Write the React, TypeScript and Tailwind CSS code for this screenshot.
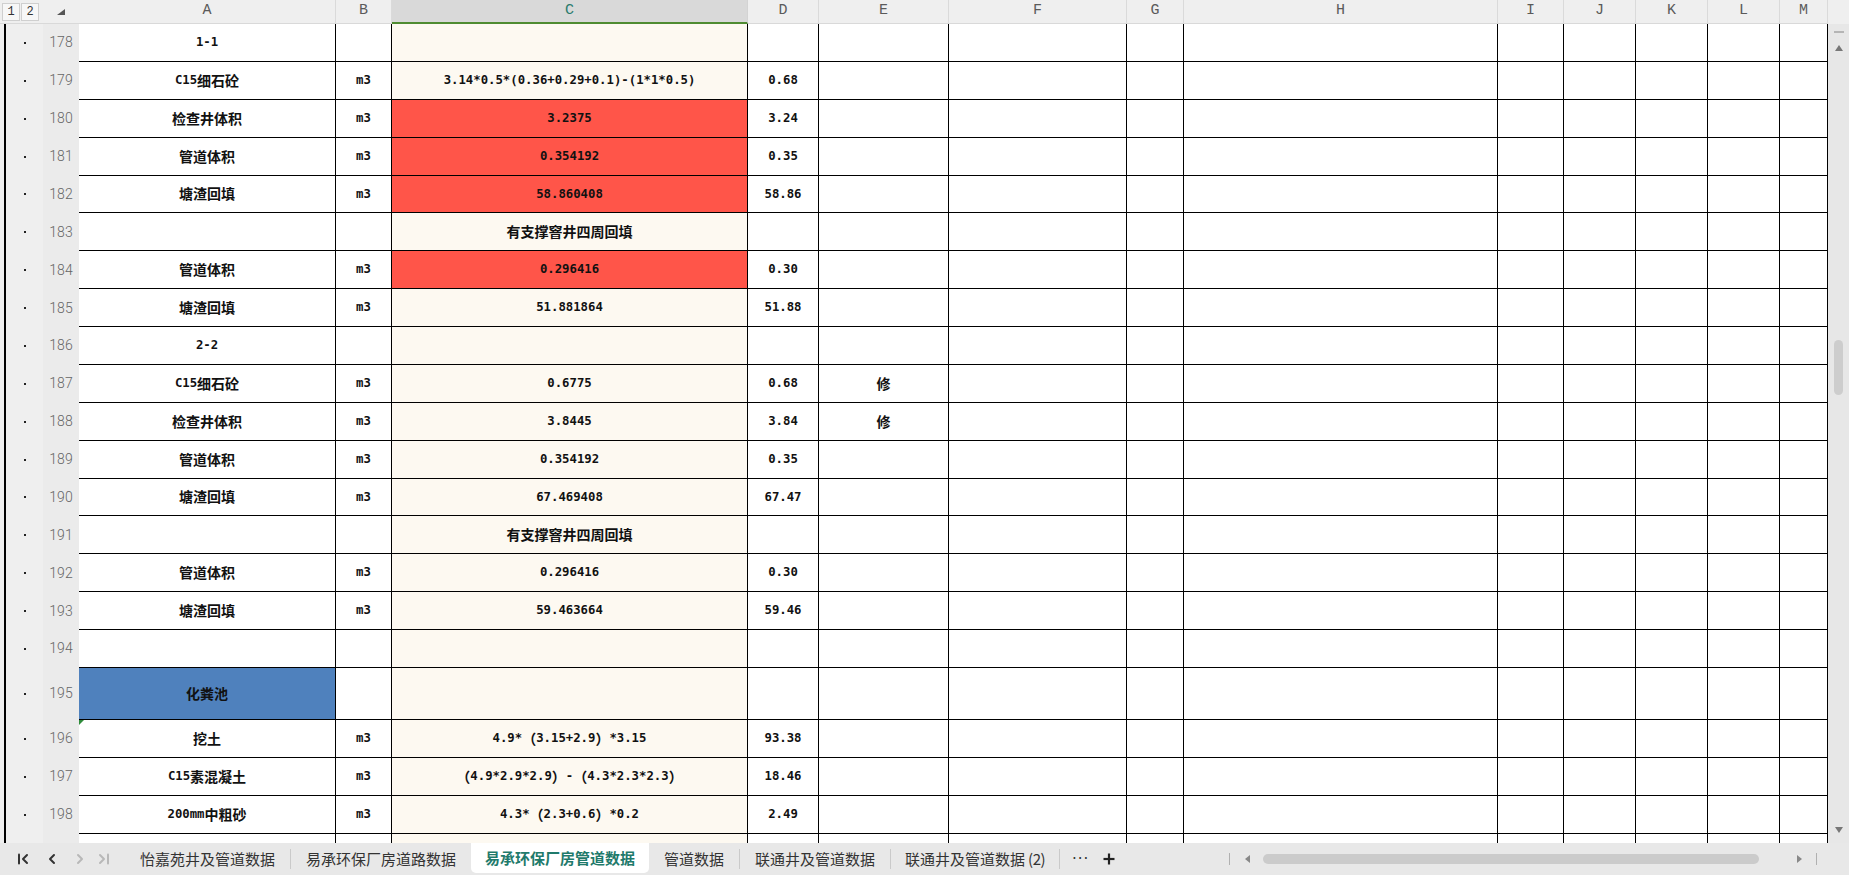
import React from "react";

type Row = {
  n: number;
  a?: string;
  b?: string;
  c?: string;
  d?: string;
  e?: string;
  red?: boolean;
  blue?: boolean;
  tall?: boolean;
  mark?: boolean;
};

const rows: Row[] = [
  { n: 178, a: "1-1" },
  { n: 179, a: "C15细石砼", b: "m3", c: "3.14*0.5*(0.36+0.29+0.1)-(1*1*0.5)", d: "0.68" },
  { n: 180, a: "检查井体积", b: "m3", c: "3.2375", d: "3.24", red: true },
  { n: 181, a: "管道体积", b: "m3", c: "0.354192", d: "0.35", red: true },
  { n: 182, a: "塘渣回填", b: "m3", c: "58.860408", d: "58.86", red: true },
  { n: 183, c: "有支撑窨井四周回填" },
  { n: 184, a: "管道体积", b: "m3", c: "0.296416", d: "0.30", red: true },
  { n: 185, a: "塘渣回填", b: "m3", c: "51.881864", d: "51.88" },
  { n: 186, a: "2-2" },
  { n: 187, a: "C15细石砼", b: "m3", c: "0.6775", d: "0.68", e: "修" },
  { n: 188, a: "检查井体积", b: "m3", c: "3.8445", d: "3.84", e: "修" },
  { n: 189, a: "管道体积", b: "m3", c: "0.354192", d: "0.35" },
  { n: 190, a: "塘渣回填", b: "m3", c: "67.469408", d: "67.47" },
  { n: 191, c: "有支撑窨井四周回填" },
  { n: 192, a: "管道体积", b: "m3", c: "0.296416", d: "0.30" },
  { n: 193, a: "塘渣回填", b: "m3", c: "59.463664", d: "59.46" },
  { n: 194 },
  { n: 195, a: "化粪池", blue: true, tall: true },
  { n: 196, a: "挖土", b: "m3", c: "4.9*（3.15+2.9）*3.15", d: "93.38", mark: true },
  { n: 197, a: "C15素混凝土", b: "m3", c: "（4.9*2.9*2.9）-（4.3*2.3*2.3）", d: "18.46" },
  { n: 198, a: "200mm中粗砂", b: "m3", c: "4.3*（2.3+0.6）*0.2", d: "2.49" },
  { n: 199 },
];

const letters = ["A", "B", "C", "D", "E", "F", "G", "H", "I", "J", "K", "L", "M"];
const colW = [
  "w-[257px]",
  "w-[56px]",
  "w-[356px]",
  "w-[71px]",
  "w-[130px]",
  "w-[178px]",
  "w-[57px]",
  "w-[314px]",
  "w-[66px]",
  "w-[72px]",
  "w-[72px]",
  "w-[72px]",
  "w-[48px]",
];

const cellFont = {
  fontFamily: '"DejaVu Sans Mono", "Noto Sans CJK SC", monospace',
};

function MixedText({ text }: { text: string }) {
  const parts = text.split(/([\u3000-\u9fff\uff00-\uffef]+)/).filter((p) => p.length > 0);
  return (
    <>
      {parts.map((p, i) =>
        /[\u3000-\u9fff\uff00-\uffef]/.test(p) ? (
          <span key={i} className="text-[14px] [font-family:'Noto_Sans_CJK_SC',sans-serif]">
            {p}
          </span>
        ) : (
          <span key={i} className="text-[12.3px]">
            {p}
          </span>
        )
      )}
    </>
  );
}

function HeaderRow() {
  return (
    <div className="flex h-[24px] shrink-0 bg-[#efefef]">
      <div className="w-[43px] shrink-0 flex items-start pt-[3px] pl-[2px] gap-[1px] border-b border-[#d9d9d9]">
        <div className="w-[18px] h-[18px] border border-[#cfcfcf] bg-[#f7f7f7] flex items-center justify-center text-[12px] text-[#333] [font-family:'Liberation_Mono',monospace]">
          1
        </div>
        <div className="w-[18px] h-[18px] border border-[#cfcfcf] bg-[#f7f7f7] flex items-center justify-center text-[12px] text-[#333] [font-family:'Liberation_Mono',monospace]">
          2
        </div>
      </div>
      <div className="w-[36px] shrink-0 flex items-center justify-center border-b border-[#d9d9d9]">
        <svg width="8" height="6" viewBox="0 0 8 6">
          <polygon points="8,0 8,6 0,6" fill="#555" />
        </svg>
      </div>
      {letters.map((l, i) => (
        <div
          key={l}
          className={`${colW[i]} shrink-0 h-full border-r flex items-center justify-center text-[15px] [font-family:'Liberation_Mono',monospace] ${
            l === "C"
              ? "bg-[#d9d9d9] text-[#2b7b6c] border-r-[#d3d3d3] border-b-2 border-b-[#4f8b31]"
              : "text-[#5a5a5a] border-r-[#dadada] border-b border-b-[#d9d9d9]"
          }`}
        >
          {l}
        </div>
      ))}
    </div>
  );
}

function BodyRow({ r }: { r: Row }) {
  const h = r.tall ? "h-[52px]" : "h-[37.88px]";
  return (
    <div className={`flex ${h} shrink-0`}>
      <div className="w-[43px] shrink-0 h-full bg-[#efefef] flex items-stretch">
        <div className="ml-[4px] w-[2px] bg-black" />
        <div className="flex-1 flex items-center justify-center">
          <div className="w-[2px] h-[2px] bg-[#222]" />
        </div>
      </div>
      <div className="w-[36px] shrink-0 h-full bg-[#ebebeb] flex items-center justify-center text-[14px] text-[#666] font-light [font-family:Roboto,sans-serif]">
        {r.n === 199 ? "" : r.n}
      </div>
      {letters.map((l, i) => {
        let bg = "bg-white";
        let text: string | undefined;
        if (l === "A") {
          text = r.a;
          if (r.blue) bg = "bg-[#4f81bd]";
        } else if (l === "B") text = r.b;
        else if (l === "C") {
          text = r.c;
          bg = r.red ? "bg-[#ff5549]" : "bg-[#fdf9f1]";
        } else if (l === "D") text = r.d;
        else if (l === "E") text = r.e;
        return (
          <div
            key={l}
            className={`${colW[i]} ${bg} relative shrink-0 h-full border-r border-b border-black flex items-center justify-center font-bold text-[#111] whitespace-nowrap overflow-hidden`}
            style={cellFont}
          >
            {l === "A" && r.mark ? (
              <svg className="absolute left-0 top-0" width="5" height="5" viewBox="0 0 5 5">
                <polygon points="0,0 5,0 0,5" fill="#2e8b3a" />
              </svg>
            ) : null}
            {text ? <MixedText text={text} /> : null}
          </div>
        );
      })}
    </div>
  );
}

function VScroll() {
  return (
    <div className="w-[21px] shrink-0 flex flex-col">
      <div className="h-[24px] shrink-0 bg-[#efefef]" />
      <div className="flex-1 bg-[#e7e7e7] flex flex-col items-center">
        <div className="mt-[7px] w-[10px] h-[2px] bg-[#b5b5b5]" />
        <svg className="mt-[12px]" width="8" height="6" viewBox="0 0 8 6">
          <polygon points="4,0 8,6 0,6" fill="#777" />
        </svg>
        <div className="mt-[289px] w-[9px] h-[55px] rounded-full bg-[#cdcdcd]" />
        <div className="flex-1" />
        <svg className="mb-[10px]" width="8" height="6" viewBox="0 0 8 6">
          <polygon points="0,0 8,0 4,6" fill="#777" />
        </svg>
      </div>
    </div>
  );
}

function NavIcon({ kind }: { kind: "first" | "prev" | "next" | "last" }) {
  const dark = kind === "first" || kind === "prev";
  const color = dark ? "#333" : "#b8b8b8";
  return (
    <svg width="12" height="12" viewBox="0 0 12 12" fill="none" stroke={color} strokeWidth="2" strokeLinecap="round" strokeLinejoin="round">
      {kind === "first" && (
        <>
          <line x1="2" y1="1.5" x2="2" y2="10.5" />
          <polyline points="10,2 6,6 10,10" />
        </>
      )}
      {kind === "prev" && <polyline points="8,2 4,6 8,10" />}
      {kind === "next" && <polyline points="4,2 8,6 4,10" />}
      {kind === "last" && (
        <>
          <polyline points="2,2 6,6 2,10" />
          <line x1="10" y1="1.5" x2="10" y2="10.5" />
        </>
      )}
    </svg>
  );
}

function Sep() {
  return <div className="w-[1px] h-[20px] bg-[#cacaca] self-center shrink-0" />;
}

function Tab({ label, active }: { label: string; active?: boolean }) {
  return (
    <div
      className={`flex items-center shrink-0 text-[15px] whitespace-nowrap [font-family:'Noto_Sans_CJK_SC',sans-serif] ${
        active
          ? "px-[14px] bg-white text-[#1f7a6b] font-semibold rounded-b-[5px] h-[30px] self-start"
          : "px-[15px] text-[#333]"
      }`}
    >
      {label}
    </div>
  );
}

function TabBar() {
  return (
    <div className="h-[32px] shrink-0 bg-[#e8e8e8] flex items-stretch">
      <div className="w-[125px] shrink-0 flex items-center pl-[17px]">
        <NavIcon kind="first" />
        <div className="ml-[17px]">
          <NavIcon kind="prev" />
        </div>
        <div className="ml-[16px]">
          <NavIcon kind="next" />
        </div>
        <div className="ml-[12px]">
          <NavIcon kind="last" />
        </div>
      </div>
      <Tab label="怡嘉苑井及管道数据" />
      <Sep />
      <Tab label="易承环保厂房道路数据" />
      <Tab label="易承环保厂房管道数据" active />
      <Tab label="管道数据" />
      <Sep />
      <Tab label="联通井及管道数据" />
      <Sep />
      <div className="flex items-center shrink-0 px-[14px] text-[15px] text-[#333] whitespace-nowrap [font-family:'Noto_Sans_CJK_SC',sans-serif]">
        联通井及管道数据<span className="ml-[3px] tracking-[-0.5px]">(2)</span>
      </div>
      <Sep />
      <div className="flex items-center ml-[12px] text-[15px] text-[#333] [font-family:'DejaVu_Sans',sans-serif] tracking-[1px]">
        ···
      </div>
      <div className="flex items-center ml-[14px]">
        <svg width="12" height="12" viewBox="0 0 12 12" stroke="#222" strokeWidth="2.2">
          <line x1="6" y1="0.5" x2="6" y2="11.5" />
          <line x1="0.5" y1="6" x2="11.5" y2="6" />
        </svg>
      </div>
      <div className="flex-1" />
      <div className="w-[620px] shrink-0 flex items-center">
        <div className="w-[1px] h-[12px] bg-[#b0b0b0]" />
        <svg className="ml-[15px]" width="5" height="8" viewBox="0 0 5 8">
          <polygon points="5,0 5,8 0,4" fill="#888" />
        </svg>
        <div className="ml-[13px] w-[496px] h-[10px] rounded-full bg-[#cbcbcb]" />
        <svg className="ml-[38px]" width="5" height="8" viewBox="0 0 5 8">
          <polygon points="0,0 5,4 0,8" fill="#888" />
        </svg>
        <div className="ml-[14px] w-[1px] h-[12px] bg-[#b0b0b0]" />
      </div>
    </div>
  );
}

export default function App() {
  return (
    <div className="w-[1849px] h-[875px] flex flex-col overflow-hidden bg-white">
      <div className="flex-1 flex min-h-0">
        <div className="w-[1828px] shrink-0 flex flex-col overflow-hidden">
          <HeaderRow />
          {rows.map((r) => (
            <BodyRow key={r.n} r={r} />
          ))}
        </div>
        <VScroll />
      </div>
      <TabBar />
    </div>
  );
}
